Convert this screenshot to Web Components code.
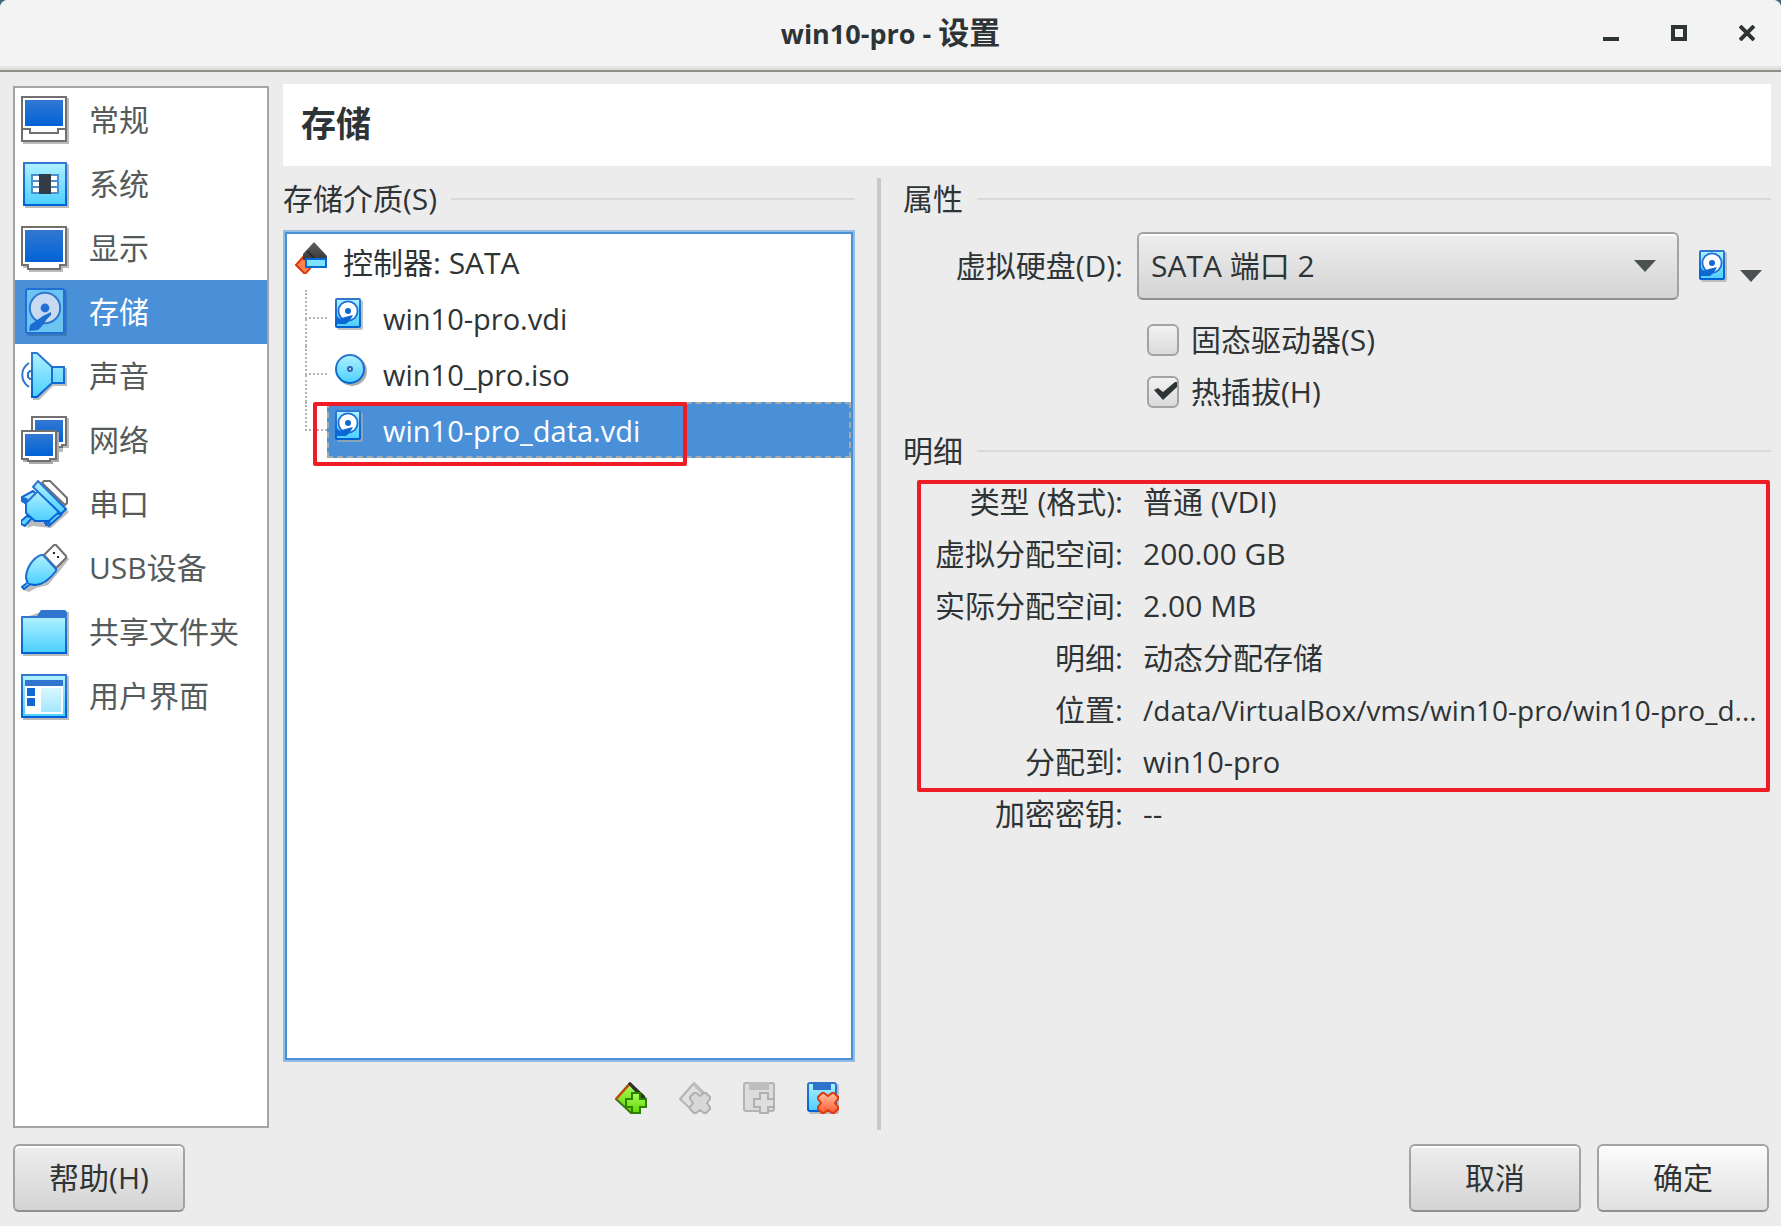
<!DOCTYPE html>
<html lang="zh-CN">
<head>
<meta charset="utf-8">
<title>win10-pro - 设置</title>
<style>
html, body {
  margin: 0;
  height: 100%;
  background: #3f6b78;
}
body {
  font-family: "Open Sans", "Noto Sans CJK SC", sans-serif;
  font-size: 30px;
  line-height: 40px;
  color: #2e3436;
}
.cjk {
  font-size: 31px;
}
</style>
</head>
<body>
<settings-window>
  <title-bar slot="title">win10-pro - <span class="cjk">设置</span></title-bar>

  <nav-list slot="nav">
    <nav-item icon="general">常规</nav-item>
    <nav-item icon="system">系统</nav-item>
    <nav-item icon="display">显示</nav-item>
    <nav-item icon="storage" selected>存储</nav-item>
    <nav-item icon="audio">声音</nav-item>
    <nav-item icon="network">网络</nav-item>
    <nav-item icon="serial">串口</nav-item>
    <nav-item icon="usb">USB设备</nav-item>
    <nav-item icon="folder">共享文件夹</nav-item>
    <nav-item icon="ui">用户界面</nav-item>
  </nav-list>

  <span slot="heading">存储</span>

  <group-box slot="media" heading="存储介质(S)" fill>
    <media-tree>
      <tree-node icon="controller">控制器: SATA</tree-node>
      <tree-node icon="hdd" child>win10-pro.vdi</tree-node>
      <tree-node icon="disc" child>win10_pro.iso</tree-node>
      <tree-node icon="hdd" child selected marked last>win10-pro_data.vdi</tree-node>
    </media-tree>
    <tool-strip></tool-strip>
  </group-box>

  <group-box slot="props" heading="属性">
    <disk-picker label="虚拟硬盘(D):" value="SATA 端口 2"></disk-picker>
    <check-option>固态驱动器(S)</check-option>
    <check-option checked>热插拔(H)</check-option>
  </group-box>

  <group-box slot="props" heading="明细">
    <detail-list>
      <detail-row label="类型 (格式):">普通 (VDI)</detail-row>
      <detail-row label="虚拟分配空间:">200.00 GB</detail-row>
      <detail-row label="实际分配空间:">2.00 MB</detail-row>
      <detail-row label="明细:">动态分配存储</detail-row>
      <detail-row label="位置:" path>/data/VirtualBox/vms/win10-pro/win10-pro_d...</detail-row>
      <detail-row label="分配到:" latin>win10-pro</detail-row>
      <detail-row slot="rest" label="加密密钥:">--</detail-row>
    </detail-list>
  </group-box>

  <push-button slot="help">帮助(H)</push-button>
  <push-button slot="actions">取消</push-button>
  <push-button slot="actions" primary>确定</push-button>
</settings-window>

<script>
// shared gradients, each icon gets its own copy in its shadow root
const defs = `
<defs>
  <linearGradient id="blue" x1="0" y1="0" x2="0" y2="1"><stop offset="0" stop-color="#3278d2"/><stop offset="1" stop-color="#0062d6"/></linearGradient>
  <linearGradient id="cyan" x1="0" y1="0" x2="0" y2="1"><stop offset="0" stop-color="#b0f1ff"/><stop offset="1" stop-color="#4bcfff"/></linearGradient>
  <linearGradient id="green" x1="0" y1="0" x2="0" y2="1"><stop offset="0" stop-color="#a6ff5c"/><stop offset="1" stop-color="#62d400"/></linearGradient>
  <linearGradient id="red" x1="0" y1="0" x2="0" y2="1"><stop offset="0" stop-color="#ffc0a0"/><stop offset="1" stop-color="#ff5a30"/></linearGradient>
  <linearGradient id="dark" x1="0" y1="0" x2="0" y2="1"><stop offset="0" stop-color="#606060"/><stop offset="1" stop-color="#383838"/></linearGradient>
</defs>`;

const plus = 'M8.5 5.5h4v3h3v4h-3v3h-4v-3h-3v-4h3z';
const cross = 'M7.5 5.5h1l2 1.5 2-1.5h1l2 2v1l-1.5 2 1.5 2v1l-2 2h-1l-2-1.5-2 1.5h-1l-2-2v-1l1.5-2-1.5-2v-1z';

// [grid size, shapes], one grid unit is two pixels
const ICONS = {
  general: [24, `
    <path d="M1 1h23v23H1z" fill="#bbb"/>
    <path d="M.5.5h22v22H.5z" fill="#fff" stroke="#707070"/>
    <path d="M2 2h19v13H2z" fill="url(#blue)"/>
    <path d="M1 16.5h3.5v2h14v-2H22" fill="none" stroke="#707070"/>`],
  system: [24, `
    <path d="M2 2h22v22H2z" fill="#bbb"/>
    <path d="M1.5 1.5h21v21h-21z" fill="url(#cyan)" stroke="url(#blue)"/>
    <path d="M5.5 7.5h13v9h-13z" fill="#fff" stroke="#4a90d0"/>
    <path d="M5 10.5h14M5 13.5h14" stroke="#4a90d0"/>
    <path d="M9 7h6v10H9z" fill="#353b45"/>`],
  display: [24, `
    <path d="M1 2h23v20h-3v2H4v-2H1z" fill="#bbb"/>
    <path d="M.5 1.5h22v19h-3v2h-16v-2h-3z" fill="#fff" stroke="#707070"/>
    <path d="M2 3h19v16H2z" fill="url(#blue)"/>`],
  storage: [24, `
    <rect x="3" y="1" width="20" height="23" rx="1" fill="#3c78b8"/>
    <rect x="2.5" y=".5" width="19" height="22" rx="1" fill="#6cc4f0" stroke="#1f70d4"/>
    <circle cx="12" cy="10" r="7.6" fill="#c8daf2" stroke="#2f76d0"/>
    <circle cx="12" cy="10" r="2.2" fill="#2070d6"/>
    <path d="M15 12l-4 2-6.5 4.5-.5 3 4.500-.5 2.500-2.500 2-3 2-2z" fill="#1c6dd2"/>`],
  audio: [24, `
    <path d="M6 1h3l7 7h7v9h-7l-7 7H6z" fill="#bbb"/>
    <path d="M5.5.5H8l7.5 7h6v8h-6l-7.5 7H5.5z" fill="url(#cyan)" stroke="url(#blue)"/>
    <path d="M15.500 7.500v8" stroke="#1c6cd4"/>
    <path d="M5 9.500H4.500l-1 1v2l1 1H5M4 5.500C-.5 8.500-.5 14.500 4 17.500" fill="none" stroke="#2f76d0"/>`],
  network: [24, `
    <path d="M6 1h18v15h-3v2h-3V9H6z" fill="#bbb"/>
    <path d="M5.500.5h17v14h-2v1h-15z" fill="#fff" stroke="#707070"/>
    <path d="M7 2h14v11H7z" fill="url(#blue)"/>
    <path d="M1 8h18v15h-3v1H4v-1H1z" fill="#aaa"/>
    <path d="M.5 7.500h17v14h-3v1h-11v-1h-3z" fill="#fff" stroke="#707070"/>
    <path d="M2 9h14v11H2z" fill="url(#blue)"/>`],
  serial: [24, `
    <path d="M9 2l15 14-9 8-9-1-3 1z" fill="#bbb"/>
    <path d="M10.500 1.500l1-1h3l8.500 8.500v2.500l-1 1z" fill="#fff" stroke="#707070"/>
    <path d="M6 5.500l3 3-4.500 4.500-4-2.500V8.500zM0 20.500L3 18l2.500 1-3.500 4-2-1zM17 16l3 1.500-6 5.500-2-1.500z" fill="url(#cyan)" stroke="#0e64d2"/>
    <path d="M.5 8.500L3 9l1 2-2 1-2-1.500zM12 20.500l3 .5-1 2h-2z" fill="#1c6cd4"/>
    <path d="M2.500 11.500L8.500 5.500 19 16l-5 4.500H7l-4.500-4z" fill="url(#cyan)" stroke="url(#blue)"/>
    <path d="M8.500.5l14 14-2.500 2.500L6 3.500z" fill="url(#cyan)" stroke="url(#blue)"/>`],
  usb: [24, `
    <path d="M18 1l6 6.500-5.500 7-5 6-6 1.500L4 24 1 23z" fill="#bbb"/>
    <path d="M11.500 5.500l5-5h1L22.500 6v1l-5 5z" fill="#fff" stroke="#707070"/>
    <path d="M16 4h1v1h-1zM18 6h1v1h-1z" fill="#222"/>
    <path d="M10 5.500h1l6.500 7v1C14 18 10 20.500 7 20.500L3.500 20 2.500 17C2.500 12 6 7 10 5.500z" fill="url(#cyan)" stroke="url(#blue)"/>
    <path d="M3 19.500L.5 21.500l1 1 2.500-2" fill="url(#cyan)" stroke="#0e64d2"/>`],
  folder: [24, `
    <path d="M10 2h14v22H1V5z" fill="#bbb"/>
    <path d="M8 4l2-3h12l1 1v4H8z" fill="#3075d0"/>
    <path d="M.5 4.500h22v18H.5z" fill="url(#cyan)" stroke="url(#blue)"/>`],
  ui: [24, `
    <path d="M1 2h23v22H1z" fill="#bbb"/>
    <path d="M.5 1.500h22v21H.5z" fill="url(#cyan)" stroke="url(#blue)"/>
    <path d="M2 7h19v14H2z" fill="#fff"/>
    <path d="M2 4h19v3H2z" fill="#3075d0"/>
    <path d="M3 8h4v4H3zM3 13h4v4H3z" fill="#1068d4"/>
    <path d="M10 8h10v12H10z" fill="url(#cyan)" fill-opacity=".5"/>`],
  controller: [16, `
    <path d="M4.500 7L9 11.500 5 16 .5 11.500z" fill="#ff8050" stroke="#d83c10"/>
    <path d="M9.500 0L16 7v2H4V6z" fill="url(#dark)"/>
    <path d="M6 4.500l4 4" stroke="#222" stroke-width=".6"/>
    <path d="M5.500 8.500h10v4h-10z" fill="#7ee2ff" stroke="#0a68d4"/>`],
  hdd: [16, `
    <rect x="1" y="1" width="13" height="15" rx="1" fill="#aaa" fill-opacity=".7"/>
    <rect x=".5" y=".5" width="12" height="14" rx=".5" fill="url(#cyan)" stroke="url(#blue)"/>
    <circle cx="6.500" cy="6.500" r="4.800" fill="#fff" stroke="#1c70d8" stroke-width=".9"/>
    <circle cx="6.500" cy="6.500" r="1.500" fill="#1068d4"/>
    <path d="M9 8.500l-1.500 2.800-2 1.700H2v-2.500l3-1z" fill="#0e68d4"/>
    <path d="M1 9l2 2v2h-2z" fill="#1068d4"/>`],
  disc: [16, `
    <circle cx="8.500" cy="8.500" r="7.500" fill="#aaa"/>
    <circle cx="7.500" cy="7.500" r="7" fill="url(#cyan)" stroke="url(#blue)"/>
    <circle cx="7.500" cy="7.500" r="1" fill="#d8e8f0" stroke="#3060b0"/>`],
  addController: [16, `
    <path d="M7.500.5L.5 8.500l7.500 7 7.500-7z" fill="url(#green)" stroke="#3a7a10"/>
    <path d="M.5 8.500L7 1.500" stroke="#d84010"/>
    <path d="M6.500 1l1-1L15 7v1h-2z" fill="#303030"/>
    <path d="${plus}" fill="url(#green)" stroke="#2e8000"/>`],
  removeController: [16, `
    <path d="M7.500.5L.5 8.500l7.500 7 7.500-7z" fill="#e0e0e0" stroke="#b4b4b4"/>
    <path d="M6.500 1l1-1L15 7v1h-2z" fill="#bebebe"/>
    <path d="${cross}" fill="#d8d8d8" stroke="#b0b0b0"/>`],
  addMedium: [16, `
    <rect x=".5" y=".5" width="15" height="14" rx="1" fill="#dcdcdc" stroke="#b4b4b4"/>
    <path d="M3 0h10v4H3z" fill="#bebebe"/>
    <path d="${plus}" fill="#dedede" stroke="#b0b0b0"/>`],
  removeMedium: [16, `
    <rect x="1" y="1" width="15" height="15" rx="1" fill="#bbb"/>
    <rect x=".5" y=".5" width="14" height="14" rx="1" fill="url(#cyan)" stroke="url(#blue)"/>
    <path d="M3 0h9v4H3z" fill="#2e72cc"/>
    <path d="${cross}" fill="url(#red)" stroke="#dc3c10"/>`],
};

class UiIcon extends HTMLElement {
  connectedCallback() {
    const [size, body] = ICONS[this.getAttribute('name')];
    this.attachShadow({ mode: 'open' }).innerHTML = `
      <style>
        :host { display: block; flex: none; }
        svg { display: block; }
      </style>
      <svg width="${size * 2}" height="${size * 2}" viewBox="0 0 ${size} ${size}" aria-hidden="true">${defs}${body}</svg>`;
  }
}

class TitleBar extends HTMLElement {
  connectedCallback() {
    this.attachShadow({ mode: 'open' }).innerHTML = `
      <style>
        :host {
          display: grid;
          grid-template-columns: 1fr auto 1fr;
          align-items: center;
          height: 66px;
          background: #f3f3f3;
          border-bottom: 2px solid #918f88;
          box-shadow: inset 0 -2px #dcdcdc, inset 0 -4px #e6e6e6;
          padding-bottom: 4px;
          border-radius: 8px 8px 0 0;
          font-size: 27px;
          font-weight: 700;
        }
        .title { grid-column: 2; }
        .controls {
          display: flex;
          justify-content: flex-end;
          gap: 28px;
          padding-right: 14px;
        }
        button {
          border: 0;
          padding: 12px;
          background: none;
          color: inherit;
        }
        svg { display: block; }
      </style>
      <div class="title"><slot></slot></div>
      <div class="controls">
        <button aria-label="最小化"><svg width="16" height="16"><path d="M0 12h16v4H0z" fill="#2e3436"/></svg></button>
        <button aria-label="最大化"><svg width="16" height="16"><path d="M2 2h12v12H2z" fill="none" stroke="#2e3436" stroke-width="4"/></svg></button>
        <button aria-label="关闭"><svg width="16" height="16"><path d="M1 1l14 14M15 1L1 15" stroke="#2e3436" stroke-width="4"/></svg></button>
      </div>`;
  }
}

class NavList extends HTMLElement {
  connectedCallback() {
    this.attachShadow({ mode: 'open' }).innerHTML = `
      <style>
        :host {
          display: block;
          box-sizing: border-box;
          background: #fff;
          border: 2px solid #a5a5a5;
        }
      </style>
      <nav><slot></slot></nav>`;
  }
}

class NavItem extends HTMLElement {
  connectedCallback() {
    this.attachShadow({ mode: 'open' }).innerHTML = `
      <style>
        :host { display: block; }
        button {
          display: flex;
          align-items: center;
          gap: 20px;
          width: 100%;
          height: 64px;
          padding: 0 6px;
          border: 0;
          background: none;
          font: inherit;
          color: #555a5b;
          white-space: nowrap;
        }
        :host([selected]) button { background: #4a90d9; color: #fff; }
      </style>
      <button><ui-icon name="${this.getAttribute('icon')}"></ui-icon><slot></slot></button>`;
  }
}

class GroupBox extends HTMLElement {
  connectedCallback() {
    this.attachShadow({ mode: 'open' }).innerHTML = `
      <style>
        :host { display: flex; flex-direction: column; }
        :host([fill]) { flex: 1; }
        header { display: flex; align-items: center; gap: 14px; height: 42px; white-space: nowrap; }
        header::after { content: ""; flex: 1; height: 2px; background: #d9d9d9; }
      </style>
      <header>${this.getAttribute('heading')}</header>
      <slot></slot>`;
  }
}

class MediaTree extends HTMLElement {
  connectedCallback() {
    this.attachShadow({ mode: 'open' }).innerHTML = `
      <style>
        :host {
          display: block;
          flex: 1;
          margin-top: 10px;
          background: #fff;
          border: 2px solid #96bce4;
        }
        div { border: 2px solid #4a90d9; box-sizing: border-box; height: 100%; }
      </style>
      <div role="tree"><slot></slot></div>`;
  }
}

class TreeNode extends HTMLElement {
  connectedCallback() {
    this.attachShadow({ mode: 'open' }).innerHTML = `
      <style>
        :host {
          display: flex;
          position: relative;
          height: 56px;
          padding-left: 8px;
        }
        :host([child]) { padding-left: 18px; font-size: 29px; }
        .branch { display: none; width: 22px; }
        :host([child]) .branch { display: block; }
        .branch::before {
          content: "";
          display: block;
          box-sizing: border-box;
          height: 29px;
          border-left: 2px dotted #b4b4b4;
          border-bottom: 2px dotted #b4b4b4;
        }
        .branch::after {
          content: "";
          display: block;
          height: 27px;
          border-left: 2px dotted #b4b4b4;
        }
        :host([last]) .branch::after { display: none; }
        .row {
          display: flex;
          flex: 1;
          align-items: center;
          gap: 16px;
          box-sizing: border-box;
          padding-top: 2px;
          white-space: nowrap;
        }
        :host([child]) .row { padding-left: 8px; }
        ui-icon { align-self: flex-start; margin-top: 6px; }
        :host([selected]) .row {
          background: #4a90d9;
          color: #fff;
          outline: 2px dashed #a8a8a8;
          outline-offset: -2px;
        }
        .mark { display: none; }
        :host([marked]) .mark {
          display: block;
          position: absolute;
          left: 26px;
          top: 0;
          width: 366px;
          height: 56px;
          border: 4px solid #ee1c24;
          border-radius: 2px;
        }
      </style>
      <div class="branch"></div>
      <div class="row" role="treeitem"><ui-icon name="${this.getAttribute('icon')}"></ui-icon><slot></slot></div>
      <div class="mark"></div>`;
  }
}

class ToolStrip extends HTMLElement {
  connectedCallback() {
    this.attachShadow({ mode: 'open' }).innerHTML = `
      <style>
        :host {
          display: flex;
          justify-content: flex-end;
          gap: 16px;
          padding: 12px 8px 8px 0;
        }
        button { border: 0; padding: 8px; background: none; }
      </style>
      <button aria-label="添加控制器"><ui-icon name="addController"></ui-icon></button>
      <button aria-label="删除控制器" disabled><ui-icon name="removeController"></ui-icon></button>
      <button aria-label="添加虚拟介质" disabled><ui-icon name="addMedium"></ui-icon></button>
      <button aria-label="删除虚拟介质"><ui-icon name="removeMedium"></ui-icon></button>`;
  }
}

const arrow = '<svg class="arrow" width="22" height="12" aria-hidden="true"><path d="M0 0h22L11 12z" fill="#4b5052"/></svg>';

class DiskPicker extends HTMLElement {
  connectedCallback() {
    this.attachShadow({ mode: 'open' }).innerHTML = `
      <style>
        :host {
          display: grid;
          grid-template-columns: 220px 1fr auto;
          column-gap: 14px;
          align-items: center;
          margin: 12px 0 14px;
          white-space: nowrap;
        }
        label { text-align: right; }
        .combo { display: grid; align-items: center; }
        .combo > * { grid-area: 1 / 1; }
        .combo .arrow { justify-self: end; margin-right: 23px; pointer-events: none; }
        select {
          appearance: none;
          width: 100%;
          height: 68px;
          padding: 0 12px;
          border: 2px solid #a3a3a3;
          border-bottom-color: #909090;
          border-radius: 6px;
          background: linear-gradient(#eee, #d4d4d4);
          box-shadow: inset 0 2px #fff;
          font: inherit;
          color: inherit;
        }
        button {
          display: flex;
          align-items: flex-end;
          gap: 9px;
          padding: 0 9px 0 6px;
          border: 0;
          background: none;
        }
        svg { display: block; }
      </style>
      <label for="disk">${this.getAttribute('label')}</label>
      <div class="combo">
        <select id="disk"><option>${this.getAttribute('value')}</option></select>
        ${arrow}
      </div>
      <button aria-label="选择虚拟硬盘"><ui-icon name="hdd"></ui-icon>${arrow}</button>`;
  }
}

class CheckOption extends HTMLElement {
  connectedCallback() {
    this.attachShadow({ mode: 'open' }).innerHTML = `
      <style>
        :host { display: block; padding-left: 244px; }
        label { display: inline-flex; align-items: center; gap: 12px; height: 52px; white-space: nowrap; }
        .box { display: grid; }
        .box > * { grid-area: 1 / 1; }
        input {
          appearance: none;
          width: 32px;
          height: 32px;
          margin: 0;
          border: 2px solid #a3a3a3;
          border-radius: 6px;
          background: linear-gradient(#f2f2f2, #dadada);
        }
        svg { display: none; pointer-events: none; }
        input:checked + svg { display: block; }
      </style>
      <label>
        <span class="box">
          <input type="checkbox" ${this.hasAttribute('checked') ? 'checked' : ''}>
          <svg width="32" height="32"><path d="M7 14l4-2 5 4L28 6h2v5L16 24z" fill="#2e3436"/></svg>
        </span>
        <slot></slot>
      </label>`;
  }
}

class DetailList extends HTMLElement {
  connectedCallback() {
    this.attachShadow({ mode: 'open' }).innerHTML = `
      <style>
        :host { display: block; margin-top: 4px; }
        .marked { position: relative; }
        .frame {
          position: absolute;
          inset: 4px 1px -4px 14px;
          border: 4px solid #ee1c24;
          border-radius: 2px;
          pointer-events: none;
        }
      </style>
      <div class="marked"><slot></slot><div class="frame"></div></div>
      <slot name="rest"></slot>`;
  }
}

class DetailRow extends HTMLElement {
  connectedCallback() {
    this.attachShadow({ mode: 'open' }).innerHTML = `
      <style>
        :host {
          display: grid;
          grid-template-columns: 220px minmax(0, 1fr);
          column-gap: 20px;
          align-items: center;
          height: 52px;
          white-space: nowrap;
        }
        .label { text-align: right; }
        :host([latin]) .value { font-size: 29px; }
        :host([path]) .value { font-size: 28px; }
      </style>
      <div class="label">${this.getAttribute('label')}</div>
      <div class="value"><slot></slot></div>`;
  }
}

class PushButton extends HTMLElement {
  connectedCallback() {
    this.attachShadow({ mode: 'open' }).innerHTML = `
      <style>
        :host { display: block; }
        button {
          min-width: 172px;
          height: 68px;
          border: 2px solid #a3a3a3;
          border-bottom-color: #909090;
          border-radius: 6px;
          background: linear-gradient(#eee, #d4d4d4);
          box-shadow: inset 0 2px #fff;
          font: inherit;
          color: inherit;
        }
        :host([primary]) button { background: linear-gradient(#fcfcfc, #e0e0e0); }
      </style>
      <button><slot></slot></button>`;
  }
}

class SettingsWindow extends HTMLElement {
  connectedCallback() {
    this.attachShadow({ mode: 'open' }).innerHTML = `
      <style>
        :host {
          display: flex;
          flex-direction: column;
          min-height: 100%;
          background: #ececec;
          border-radius: 8px 8px 0 0;
        }
        .content {
          flex: 1;
          display: grid;
          grid-template-columns: 256px minmax(0, 1fr);
          column-gap: 14px;
          padding: 12px 10px 14px 13px;
        }
        slot[name="nav"]::slotted(*) { margin: 2px 0; }
        main { display: flex; flex-direction: column; }
        h1 {
          margin: 0 0 12px;
          padding: 15px 18px 17px;
          background: #fff;
          font-size: 35px;
          line-height: 50px;
        }
        .panes {
          flex: 1;
          display: grid;
          grid-template-columns: minmax(0, 572fr) 4px minmax(0, 868fr);
          column-gap: 22px;
        }
        .pane { display: flex; flex-direction: column; }
        .props { gap: 12px; }
        .splitter { background: #c8c8c8; }
        footer {
          display: flex;
          justify-content: space-between;
          padding: 0 12px 14px 13px;
        }
        .actions { display: flex; gap: 16px; }
      </style>
      <slot name="title"></slot>
      <div class="content">
        <slot name="nav"></slot>
        <main>
          <h1><slot name="heading"></slot></h1>
          <div class="panes">
            <section class="pane"><slot name="media"></slot></section>
            <div class="splitter"></div>
            <section class="pane props"><slot name="props"></slot></section>
          </div>
        </main>
      </div>
      <footer>
        <slot name="help"></slot>
        <div class="actions"><slot name="actions"></slot></div>
      </footer>`;
  }
}

customElements.define('ui-icon', UiIcon);
customElements.define('title-bar', TitleBar);
customElements.define('nav-list', NavList);
customElements.define('nav-item', NavItem);
customElements.define('group-box', GroupBox);
customElements.define('media-tree', MediaTree);
customElements.define('tree-node', TreeNode);
customElements.define('tool-strip', ToolStrip);
customElements.define('disk-picker', DiskPicker);
customElements.define('check-option', CheckOption);
customElements.define('detail-list', DetailList);
customElements.define('detail-row', DetailRow);
customElements.define('push-button', PushButton);
customElements.define('settings-window', SettingsWindow);
</script>
</body>
</html>
